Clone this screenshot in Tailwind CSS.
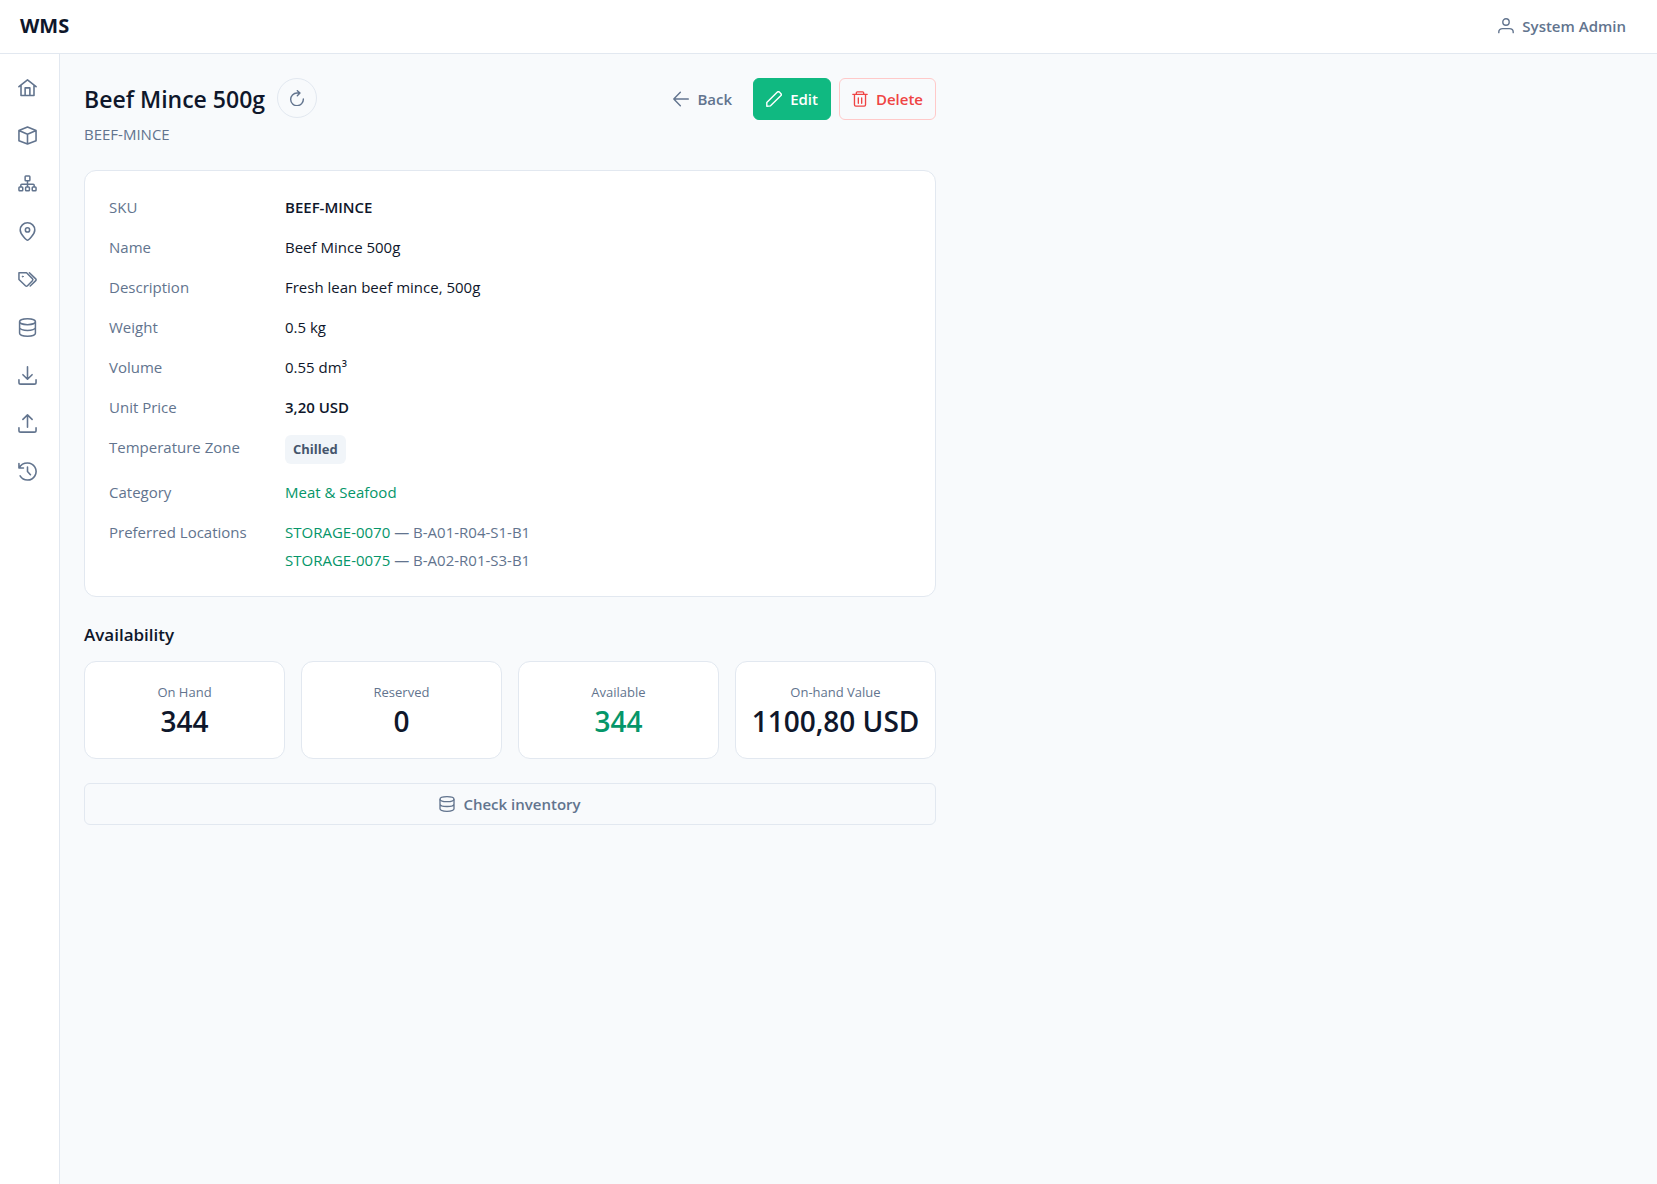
<!DOCTYPE html>
<html lang="en">
<head>
  <meta charset="UTF-8" />
  <meta name="viewport" content="width=device-width, initial-scale=1.0" />
  <title>Beef Mince 500g - WMS</title>
  <script src="https://cdn.jsdelivr.net/npm/@tailwindcss/browser@4"></script>
</head>
<body class="min-h-screen flex flex-col bg-slate-50 font-['Open_Sans','Noto_Sans',sans-serif] text-[15px] leading-6 text-slate-900">

  <!-- Top bar -->
  <header class="flex items-center justify-between h-[54px] px-5 pb-px bg-white border-b border-slate-200">
    <a href="#" class="text-xl font-bold">WMS</a>
    <button type="button" class="flex items-center gap-2 px-[11px] font-semibold text-slate-500">
      <svg class="size-4" viewBox="0 0 24 24" fill="none" stroke="currentColor" stroke-width="2.1" stroke-linecap="round" aria-hidden="true"><circle cx="12" cy="6" r="4.8" /><path d="M1.200 22v-1c0-3 2.300-5 5.800-5h10c3.500 0 5.800 2 5.800 5v1" /></svg>
      System Admin
    </button>
  </header>

  <div class="flex flex-1">

    <!-- Sidebar -->
    <nav aria-label="Main" class="w-[60px] shrink-0 pt-[9px] px-2 bg-white border-r border-slate-200 text-slate-500">
      <a href="#" aria-label="Home" class="flex items-center h-12 pl-[10px]">
        <svg class="size-[19px]" viewBox="0 0 24 24" fill="none" stroke="currentColor" stroke-width="2" stroke-linecap="round" stroke-linejoin="round"><path d="M1.200 11 12 2.400 22.800 11M3.800 9.200V22h16.400V9.200M9 22V12.500h6V22" /></svg>
      </a>
      <a href="#" aria-label="Products" class="flex items-center h-12 pl-[10px]">
        <svg class="size-[19px]" viewBox="0 0 24 24" fill="none" stroke="currentColor" stroke-width="2" stroke-linejoin="round"><path d="M12 1.200 22.800 5.800v12.700L12 22.800 1.200 18.500V5.800zM1.200 5.800 12 10.500l10.800-4.700M12 10.500v12.300" /></svg>
      </a>
      <a href="#" aria-label="Categories" class="flex items-center h-12 pl-[10px]">
        <svg class="size-[19px]" viewBox="0 0 24 24" fill="none" stroke="currentColor" stroke-width="1.9" stroke-linejoin="round"><rect x="9" y="2.500" width="6" height="6" rx="1" /><rect x="1.200" y="16.500" width="4.800" height="4.800" rx="1" /><rect x="9.600" y="16.500" width="4.800" height="4.800" rx="1" /><rect x="18" y="16.500" width="4.800" height="4.800" rx="1" /><path d="M12 8.500v8M3.600 16.500V14c0-.8.400-1.200 1.200-1.200h14.400c.8 0 1.200.4 1.200 1.200v2.500" /></svg>
      </a>
      <a href="#" aria-label="Locations" class="flex items-center h-12 pl-[10px]">
        <svg class="size-[19px]" viewBox="0 0 24 24" fill="none" stroke="currentColor" stroke-width="2" stroke-linejoin="round"><path d="M12 23c-1 0-9.200-7.500-9.200-13a9.200 9 0 0 1 18.400 0c0 5.500-8.200 13-9.200 13z" /><circle cx="12" cy="10" r="2.700" /></svg>
      </a>
      <a href="#" aria-label="Labels" class="flex items-center h-12 pl-[10px]">
        <svg class="size-[19px]" viewBox="0 0 24 24" fill="none" stroke="currentColor" stroke-width="1.9" stroke-linecap="round" stroke-linejoin="round"><path d="M1.200 3.500h9.600l7.400 7.400c.8.8.8 1.800 0 2.600L12 19.800c-.8.8-1.800.8-2.600 0l-8.200-7.900z" /><path d="m14.400 3.500 8 7.700c.7.7.7 1.500 0 2.200l-7 6.900" /><circle cx="6" cy="8.300" r=".7" fill="currentColor" stroke-width="1" /></svg>
      </a>
      <a href="#" aria-label="Inventory" class="flex items-center h-12 pl-[10px]">
        <svg class="size-[19px]" viewBox="0 0 24 24" fill="none" stroke="currentColor" stroke-width="1.9"><ellipse cx="12" cy="4.700" rx="10" ry="3.700" /><path d="M2 4.700v14.600C2 21.400 6.500 23 12 23s10-1.600 10-3.700V4.700M2 12c0 2.100 4.500 3.800 10 3.800s10-1.700 10-3.800" /></svg>
      </a>
      <a href="#" aria-label="Inbound" class="flex items-center h-12 pl-[10px]">
        <svg class="size-[19px]" viewBox="0 0 24 24" fill="none" stroke="currentColor" stroke-width="2" stroke-linecap="round" stroke-linejoin="round"><path d="M12 1v15.500M6.200 11l5.800 5.700 5.800-5.700M1.200 17.500v3.200c0 1.200 1 2.200 2.200 2.200h17.200c1.200 0 2.200-1 2.200-2.200v-3.200" /></svg>
      </a>
      <a href="#" aria-label="Outbound" class="flex items-center h-12 pl-[10px]">
        <svg class="size-[19px]" viewBox="0 0 24 24" fill="none" stroke="currentColor" stroke-width="2" stroke-linecap="round" stroke-linejoin="round"><path d="M12 16.700V1.200M6.200 6.800 12 1.100l5.800 5.700M1.200 17.500v3.200c0 1.200 1 2.200 2.200 2.200h17.200c1.200 0 2.200-1 2.200-2.200v-3.200" /></svg>
      </a>
      <a href="#" aria-label="History" class="flex items-center h-12 pl-[10px]">
        <svg class="size-[19px]" viewBox="0 0 24 24" fill="none" stroke="currentColor" stroke-width="2" stroke-linecap="round" stroke-linejoin="round"><path d="M1.200 1.800v5.700h5.700M1.500 7.300C3.500 3.500 7.500 1.200 12 1.200a10.800 10.800 0 1 1-9.300 16.300M12 6.500V12l3.700 4" /></svg>
      </a>
    </nav>

    <main class="flex-1 p-6">
      <div class="max-w-[852px]">

        <!-- Title and actions -->
        <div class="flex items-start justify-between mb-6">
          <div>
            <div class="flex items-center gap-3">
              <h1 class="pt-px text-[23px] font-semibold">Beef Mince 500g</h1>
              <button type="button" aria-label="Refresh" class="flex items-center justify-center size-10 rounded-full border border-slate-200 text-slate-500">
                <svg class="size-4" viewBox="0 0 24 24" fill="none" stroke="currentColor" stroke-width="2.1" stroke-linecap="round" stroke-linejoin="round"><path d="M21.500 13.500A9.500 9.500 0 1 1 12 4.500h4.500M12.500 1l4 3.500-4 4" /></svg>
              </button>
            </div>
            <p class="mt-1 text-slate-500">BEEF-MINCE</p>
          </div>
          <div class="flex gap-2 font-semibold">
            <button type="button" class="flex items-center gap-2 h-[42px] px-3 rounded-md border border-transparent text-slate-500">
              <svg class="size-4" viewBox="0 0 24 24" fill="none" stroke="currentColor" stroke-width="2.1" stroke-linecap="round" stroke-linejoin="round" aria-hidden="true"><path d="M23 12H1.200M11 2 1.200 12 11 22" /></svg>
              Back
            </button>
            <button type="button" class="flex items-center gap-2 h-[42px] px-3 rounded-md border border-[#10b981] bg-[#10b981] text-white">
              <svg class="size-4" viewBox="0 0 24 24" fill="none" stroke="currentColor" stroke-width="2.1" stroke-linejoin="round" aria-hidden="true"><path d="M1.200 22.800v-5.600L16.700 1.900c1-1 2.700-1 3.700 0l1.700 1.700c1 1 1 2.700 0 3.700L6.800 22.300z" /></svg>
              Edit
            </button>
            <button type="button" class="flex items-center gap-2 h-[42px] px-3 rounded-md border border-red-200 text-[#ef4444]">
              <svg class="size-4" viewBox="0 0 24 24" fill="none" stroke="currentColor" stroke-width="2" stroke-linecap="round" stroke-linejoin="round" aria-hidden="true"><path d="M1.200 5h21.600M6.500 5V2.800c0-1 .6-1.600 1.600-1.600h7.800c1 0 1.600.6 1.600 1.600V5M3.700 5v15.800c0 1.200.8 2 2 2h12.600c1.200 0 2-.8 2-2V5M9.500 10.500v8M14.500 10.500v8" /></svg>
              Delete
            </button>
          </div>
        </div>

        <!-- Product details -->
        <dl class="grid grid-cols-[160px_1fr] gap-4 mb-6 p-6 bg-white border border-slate-200 rounded-xl">
          <dt class="text-slate-500">SKU</dt>
          <dd class="font-semibold">BEEF-MINCE</dd>
          <dt class="text-slate-500">Name</dt>
          <dd>Beef Mince 500g</dd>
          <dt class="text-slate-500">Description</dt>
          <dd>Fresh lean beef mince, 500g</dd>
          <dt class="text-slate-500">Weight</dt>
          <dd>0.5 kg</dd>
          <dt class="text-slate-500">Volume</dt>
          <dd>0.55 dm³</dd>
          <dt class="text-slate-500">Unit Price</dt>
          <dd class="font-semibold">3,20 USD</dd>
          <dt class="text-slate-500">Temperature Zone</dt>
          <dd class="flex"><span class="px-2 py-1 rounded-md bg-slate-100 text-[13px] leading-[21px] font-bold text-slate-600">Chilled</span></dd>
          <dt class="text-slate-500">Category</dt>
          <dd><a href="#" class="text-[#059669]">Meat &amp; Seafood</a></dd>
          <dt class="text-slate-500">Preferred Locations</dt>
          <dd class="flex flex-col gap-1 text-slate-500">
            <div><a href="#" class="text-[#059669]">STORAGE-0070</a> — B-A01-R04-S1-B1</div>
            <div><a href="#" class="text-[#059669]">STORAGE-0075</a> — B-A02-R01-S3-B1</div>
          </dd>
        </dl>

        <!-- Availability -->
        <h2 class="mb-3 text-[17px] leading-7 font-semibold">Availability</h2>
        <div class="grid grid-cols-4 gap-4 mb-6 text-center">
          <div class="py-5 bg-white border border-slate-200 rounded-xl">
            <div class="text-[13px] leading-5 text-slate-500">On Hand</div>
            <div class="mt-0.5 text-[28px] leading-[34px] font-semibold">344</div>
          </div>
          <div class="py-5 bg-white border border-slate-200 rounded-xl">
            <div class="text-[13px] leading-5 text-slate-500">Reserved</div>
            <div class="mt-0.5 text-[28px] leading-[34px] font-semibold">0</div>
          </div>
          <div class="py-5 bg-white border border-slate-200 rounded-xl">
            <div class="text-[13px] leading-5 text-slate-500">Available</div>
            <div class="mt-0.5 text-[28px] leading-[34px] font-semibold text-[#059669]">344</div>
          </div>
          <div class="py-5 bg-white border border-slate-200 rounded-xl">
            <div class="text-[13px] leading-5 text-slate-500">On-hand Value</div>
            <div class="mt-0.5 text-[28px] leading-[34px] font-semibold">1100,80 USD</div>
          </div>
        </div>

        <button type="button" class="flex items-center justify-center gap-2 w-full h-[42px] rounded-md border border-slate-200 font-semibold text-slate-500">
          <svg class="size-4" viewBox="0 0 24 24" fill="none" stroke="currentColor" stroke-width="2" aria-hidden="true"><ellipse cx="12" cy="4.700" rx="10.500" ry="3.700" /><path d="M1.500 4.700v14.600c0 2.100 4.700 3.700 10.500 3.700s10.500-1.600 10.500-3.700V4.700M1.500 12c0 2.100 4.700 3.800 10.500 3.800s10.500-1.700 10.500-3.800" /></svg>
          Check inventory
        </button>

      </div>
    </main>
  </div>

</body>
</html>
